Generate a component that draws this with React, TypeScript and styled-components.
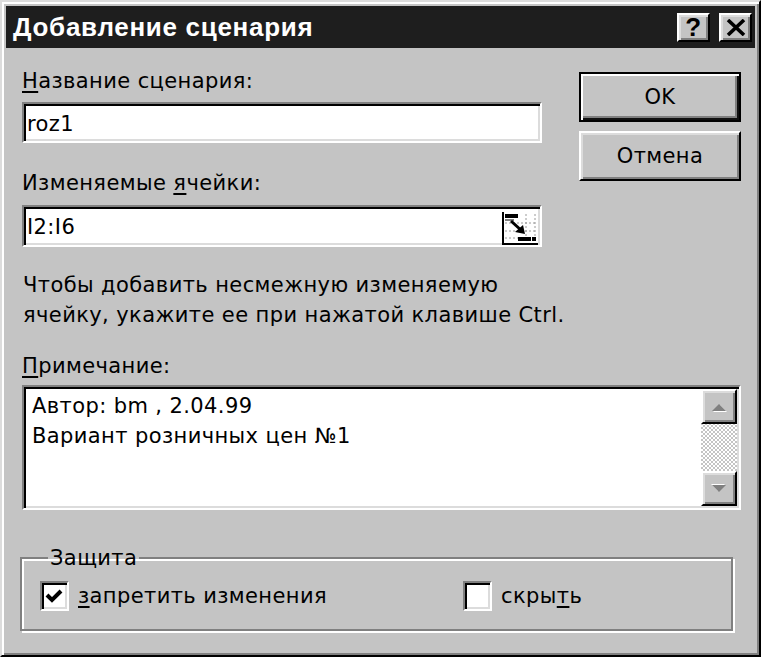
import React from 'react';
import styled, {createGlobalStyle, css} from 'styled-components';

const GlobalStyle = createGlobalStyle`
  html, body {
    margin: 0;
    padding: 0;
    background: #c4c4c4;
  }
  * {
    box-sizing: border-box;
  }
`

const raised = css`
  border: 2px solid;
  border-color: #fff #000 #000 #fff;
  box-shadow: inset 2px 2px 0 #dcdcdc, inset -2px -2px 0 #808080;
`

const sunken = css`
  border: 2px solid;
  border-color: #808080 #fff #fff #808080;
  box-shadow: inset 2px 2px 0 #000, inset -2px -2px 0 #dcdcdc;
`

const Window = styled.div`
  width: 761px;
  height: 657px;
  background: #c4c4c4;
  border: 2px solid;
  border-color: #dcdcdc #000 #000 #dcdcdc;
  box-shadow: inset 2px 2px 0 #fff, inset -2px -2px 0 #808080;
  padding: 4px;
  font-family: "DejaVu Sans", "Noto Sans", sans-serif;
  font-size: 21px;
  letter-spacing: 0.4px;
  color: #000;
  display: flex;
  flex-direction: column;
`

const TitleBar = styled.div`
  height: 42px;
  background: #1e1e1e;
  display: flex;
  align-items: center;
  padding: 0 3px 0 7px;
`

const TitleText = styled.div`
  flex: 1;
  color: #fff;
  font-family: "Liberation Sans", Arial, sans-serif;
  font-weight: bold;
  font-size: 26px;
  letter-spacing: 0.7px;
`

const TitleButton = styled.div<{$gap?: number}>`
  ${raised};
  width: 33px;
  height: 29px;
  margin-left: ${p => p.$gap ?? 0}px;
  background: #c4c4c4;
  display: flex;
  align-items: center;
  justify-content: center;
  font-family: "Liberation Sans", Arial, sans-serif;
  font-weight: bold;
  font-size: 26px;
  line-height: 1;
  color: #000;
`

const Body = styled.div`
  flex: 1;
  display: flex;
  flex-direction: column;
  padding: 19px 14px 0 16px;
`

const TopRow = styled.div`
  display: flex;
  gap: 37px;
`

const LeftCol = styled.div`
  width: 520px;
  display: flex;
  flex-direction: column;
`

const RightCol = styled.div`
  width: 162px;
  padding-top: 5px;
  display: flex;
  flex-direction: column;
  gap: 9px;
`

const Label = styled.div<{$mt?: number}>`
  line-height: 28px;
  margin-top: ${p => p.$mt ?? 0}px;
  white-space: nowrap;
`

const Key = styled.u`
  text-decoration-thickness: 2px;
  text-underline-offset: 3px;
`

const Field = styled.div<{$mt: number; $h: number}>`
  ${sunken};
  margin-top: ${p => p.$mt}px;
  height: ${p => p.$h}px;
  background: #fff;
  display: flex;
  align-items: center;
  padding: 2px 2px 0 3px;
`

const FieldText = styled.span`
  flex: 1;
  line-height: 30px;
`

const RefButton = styled.div`
  width: 36px;
  height: 33px;
  margin-top: 2px;
  display: flex;
`

const Button = styled.div<{$default?: boolean}>`
  height: 50px;
  background: #c4c4c4;
  display: flex;
  align-items: center;
  justify-content: center;
  ${p => p.$default ? css`
    border: 2px solid #000;
    box-shadow: inset 2px 2px 0 #fff, inset -2px -2px 0 #111, inset -4px -4px 0 #808080;
  ` : raised};
`

const Hint = styled.div`
  margin-top: 23px;
  line-height: 30px;
  padding-left: 1px;
`

const Memo = styled.div`
  ${sunken};
  margin-top: 5px;
  height: 125px;
  background: #fff;
  display: flex;
  padding: 2px 2px 2px 0;
`

const MemoText = styled.div`
  flex: 1;
  padding: 2px 0 0 8px;
  line-height: 30px;
`

const ScrollBar = styled.div`
  width: 36px;
  display: flex;
  flex-direction: column;
  background: repeating-conic-gradient(#c4c4c4 0 25%, #fff 0 50%) 0 0 / 4px 4px;
`

const ScrollTrack = styled.div`
  flex: 1;
`

const ScrollButton = styled.div`
  ${raised};
  height: 35px;
  background: #c4c4c4;
  display: flex;
  align-items: center;
  justify-content: center;
`

const Group = styled.fieldset`
  margin: 36px 0 0 -2px;
  width: 713px;
  padding: 11px 0 18px 18px;
  border: 2px solid #808080;
  box-shadow: inset 2px 2px 0 #fff, 2px 2px 0 #fff;
  min-inline-size: 0;
`

const Legend = styled.legend`
  margin-left: 8px;
  padding: 0 2px;
  line-height: 24px;
`

const CheckRow = styled.div`
  display: grid;
  grid-template-columns: 423px auto;
`

const CheckItem = styled.div`
  display: flex;
  align-items: center;
  gap: 9px;
  line-height: 30px;
`

const Box = styled.div`
  ${sunken};
  width: 29px;
  height: 30px;
  background: #fff;
  display: flex;
  align-items: center;
  justify-content: center;
`

const CheckMark = () => (
    <svg width="21" height="21" viewBox="0 0 21 21">
        <polyline points="3,9 8,14 17,5" fill="none" stroke="#000" strokeWidth="4" strokeLinejoin="miter"/>
    </svg>
)

const CloseIcon = () => (
    <svg width="20" height="17" viewBox="0 0 20 17">
        <path d="M2 1 L18 16 M18 1 L2 16" stroke="#000" strokeWidth="3.6"/>
    </svg>
)

const Arrow = ({down}: {down?: boolean}) => (
    <svg width="18" height="12" viewBox="0 0 18 12" style={down ? {transform: 'rotate(180deg)'} : undefined}>
        <polygon points="3,11 17,11 10,4" fill="#fff"/>
        <polygon points="2,10 16,10 9,3" fill="#808080"/>
    </svg>
)

const RefIcon = () => (
    <svg width="36" height="33" viewBox="0 0 36 33">
        <rect x="0" y="0" width="36" height="33" fill="#fff"/>
        <g stroke="#9a9a9a" strokeWidth="1" strokeDasharray="2 2">
            <line x1="24" y1="2" x2="24" y2="30"/>
            <line x1="33" y1="2" x2="33" y2="30"/>
            <line x1="3" y1="11" x2="35" y2="11"/>
            <line x1="3" y1="19" x2="35" y2="19"/>
            <line x1="3" y1="26" x2="35" y2="26"/>
        </g>
        <rect x="3" y="2" width="13" height="4" fill="#000"/>
        <rect x="3" y="7" width="9" height="2" fill="#808080"/>
        <path d="M9 9 L20 19" stroke="#000" strokeWidth="3"/>
        <polygon points="13,20 23,22 21,13" fill="#000"/>
        <rect x="16" y="25" width="13" height="4" fill="#000"/>
        <rect x="30" y="25" width="4" height="4" fill="#000"/>
        <path d="M1 0 L1 32 L36 32" fill="none" stroke="#000" strokeWidth="2"/>
    </svg>
)

export default function App() {
    return (
        <>
            <GlobalStyle/>
            <Window>
                <TitleBar>
                    <TitleText>Добавление сценария</TitleText>
                    <TitleButton>?</TitleButton>
                    <TitleButton $gap={9}><CloseIcon/></TitleButton>
                </TitleBar>
                <Body>
                    <TopRow>
                        <LeftCol>
                            <Label><Key>Н</Key>азвание сценария:</Label>
                            <Field $mt={7} $h={41}><FieldText>roz1</FieldText></Field>
                            <Label $mt={26}>Изменяемые <Key>я</Key>чейки:</Label>
                            <Field $mt={8} $h={42}>
                                <FieldText>I2:I6</FieldText>
                                <RefButton><RefIcon/></RefButton>
                            </Field>
                        </LeftCol>
                        <RightCol>
                            <Button $default>OK</Button>
                            <Button>Отмена</Button>
                        </RightCol>
                    </TopRow>
                    <Hint>
                        Чтобы добавить несмежную изменяемую<br/>
                        ячейку, укажите ее при нажатой клавише Ctrl.
                    </Hint>
                    <Label $mt={22}><Key>П</Key>римечание:</Label>
                    <Memo>
                        <MemoText>
                            Автор: bm , 2.04.99<br/>
                            Вариант розничных цен №1
                        </MemoText>
                        <ScrollBar>
                            <ScrollButton><Arrow/></ScrollButton>
                            <ScrollTrack/>
                            <ScrollButton><Arrow down/></ScrollButton>
                        </ScrollBar>
                    </Memo>
                    <Group>
                        <Legend>Защита</Legend>
                        <CheckRow>
                            <CheckItem>
                                <Box><CheckMark/></Box>
                                <span><Key>з</Key>апретить изменения</span>
                            </CheckItem>
                            <CheckItem>
                                <Box/>
                                <span>скры<Key>т</Key>ь</span>
                            </CheckItem>
                        </CheckRow>
                    </Group>
                </Body>
            </Window>
        </>
    )
}
